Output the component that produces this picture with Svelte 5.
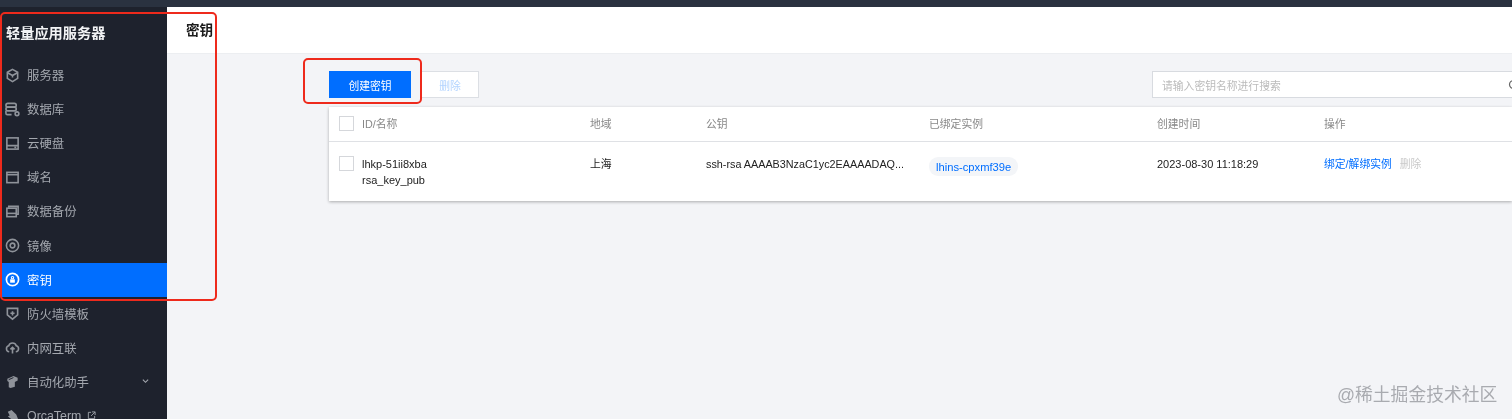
<script>
  const navItems = [
    { label: '服务器', icon: 'server' },
    { label: '数据库', icon: 'database' },
    { label: '云硬盘', icon: 'disk' },
    { label: '域名', icon: 'domain' },
    { label: '数据备份', icon: 'backup' },
    { label: '镜像', icon: 'image' },
    { label: '密钥', icon: 'key', active: true },
    { label: '防火墙模板', icon: 'shield' },
    { label: '内网互联', icon: 'cloud' },
    { label: '自动化助手', icon: 'box', chevron: true },
    { label: 'OrcaTerm', icon: 'orca', external: true }
  ];
</script>

<div class="page">
  <div class="topbar"></div>
  <div class="main">
    <aside class="sidebar">
      <div class="brand">轻量应用服务器</div>
      <nav>
        {#each navItems as item}
          <div class="nav-item" class:active={item.active}>
            <svg class="nav-icon" viewBox="0 0 16 16" fill="none" stroke="currentColor" stroke-width="1.7">
              {#if item.icon === 'server'}
                <path d="M8 1.500l5.500 3v6.500L8 14.500 2.500 11V4.500z" />
                <path d="M2.800 5L8 8l5.200-3M8 8v2" />
              {:else if item.icon === 'database'}
                <rect x="1" y="1.500" width="11" height="4" rx="2" />
                <rect x="1" y="5.500" width="11" height="4" rx="2" />
                <path d="M7 13.500H2.500A1.500 1.500 0 0 1 1 12V9.500" />
                <circle cx="12.800" cy="12.500" r="2" />
              {:else if item.icon === 'disk'}
                <rect x="2" y="2" width="12" height="12" />
                <path d="M2 10.300h12M10 12.300h2" />
              {:else if item.icon === 'domain'}
                <rect x="2" y="2.500" width="12" height="11" />
                <path d="M2 5h12" />
              {:else if item.icon === 'backup'}
                <path d="M4 4V2.500h10V11h-2" />
                <rect x="2" y="4.500" width="10" height="9" />
                <path d="M2 10h10" />
              {:else if item.icon === 'image'}
                <circle cx="8" cy="8" r="6.500" />
                <circle cx="8" cy="8" r="2.500" />
              {:else if item.icon === 'key'}
                <circle cx="8" cy="8" r="6.500" stroke-width="1.800" />
                <circle cx="8" cy="6" r="1.300" stroke-width="1.100" />
                <rect x="5.500" y="7.800" width="5" height="3.600" fill="currentColor" stroke="none" />
              {:else if item.icon === 'shield'}
                <path d="M2.500 2.500h11v7L8 14l-5.500-4.500z" />
                <path d="M8 5.500v4.500M5.800 7.700h4.400" />
              {:else if item.icon === 'cloud'}
                <path d="M4.500 12.500a3.200 3.200 0 0 1-.5-6.300 4.200 4.200 0 0 1 8 0 3.200 3.200 0 0 1-.5 6.300" />
                <path d="M8 14.500V8M5.800 10L8 7.800l2.200 2.200" />
              {:else if item.icon === 'box'}
                <path d="M2.500 5L9 2l4.500 2v3l-3 1.500v5L6 15l-2-1V8.500L2.500 7.500z" fill="currentColor" stroke="none" />
                <path d="M4 6l5-2.200" stroke="#1e222d" stroke-width="1" />
              {:else}
                <path d="M3 4l4-2 5 5 2 5-2 2-5-2-4-3 2-1z" fill="currentColor" stroke="none" />
              {/if}
            </svg>
            <span>{item.label}</span>
            {#if item.external}
              <svg class="external" viewBox="0 0 10 10" fill="none" stroke="currentColor" stroke-width="1">
                <path d="M8.500 5.500v3h-7v-7h3M5.500 1h3.500v3.500M9 1L4.500 5.500" />
              </svg>
            {/if}
            {#if item.chevron}
              <svg class="chevron" viewBox="0 0 8 6" fill="none" stroke="currentColor" stroke-width="1.300">
                <path d="M1 1.500l3 3 3-3" />
              </svg>
            {/if}
          </div>
        {/each}
      </nav>
    </aside>

    <div class="content">
      <header class="content-header">密钥</header>
      <div class="body">
        <div class="toolbar">
          <div class="btn primary">创建密钥</div>
          <div class="btn ghost">删除</div>
          <div class="search">
            <span>请输入密钥名称进行搜索</span>
            <svg class="search-icon" viewBox="0 0 12 12" fill="none" stroke="#666" stroke-width="1.200">
              <circle cx="5.500" cy="5.500" r="4" />
              <path d="M8.500 8.500L11 11" />
            </svg>
          </div>
        </div>

        <div class="table">
          <div class="row head">
            <div class="check"></div>
            <div>ID/名称</div>
            <div>地域</div>
            <div>公钥</div>
            <div>已绑定实例</div>
            <div>创建时间</div>
            <div>操作</div>
          </div>
          <div class="row item">
            <div class="check"></div>
            <div class="latin">lhkp-51ii8xba<br />rsa_key_pub</div>
            <div>上海</div>
            <div>ssh-rsa AAAAB3NzaC1yc2EAAAADAQ...</div>
            <div><span class="tag">lhins-cpxmf39e</span></div>
            <div class="latin">2023-08-30 11:18:29</div>
            <div class="actions"><span class="link">绑定/解绑实例</span><span class="off">删除</span></div>
          </div>
        </div>
      </div>
    </div>
  </div>

  <div class="mark mark-side"></div>
  <div class="mark mark-btn"></div>
  <div class="watermark">@稀土掘金技术社区</div>
</div>

<style>
  :global(body) {
    margin: 0;
    overflow: hidden;
  }

  .page {
    position: relative;
    width: 1512px;
    height: 419px;
    overflow: hidden;
    background: #f3f4f7;
    font-family: "Liberation Sans", "Noto Sans CJK SC", sans-serif;
    font-size: 10.8px;
    color: #222;
    filter: blur(0.3px);
  }

  .topbar {
    height: 7px;
    background: #2a3240;
  }

  .main {
    display: flex;
    height: 412px;
  }

  .sidebar {
    width: 167px;
    flex-shrink: 0;
    background: #1e222d;
    color: #a3a7ae;
  }

  .brand {
    height: 51px;
    padding: 0 0 0 6px;
    line-height: 52px;
    font-size: 14.2px;
    font-weight: 700;
    color: #f2f3f5;
  }

  nav {
    display: flex;
    flex-direction: column;
  }

  .nav-item {
    display: flex;
    align-items: center;
    position: relative;
    height: 34.1px;
    padding-left: 5px;
    font-size: 12.4px;
  }

  .nav-item.active {
    background: #006eff;
    color: #fff;
  }

  .nav-icon {
    width: 15px;
    height: 15px;
    margin-right: 7px;
    flex-shrink: 0;
    opacity: 0.85;
  }

  .active .nav-icon {
    opacity: 1;
  }

  .external {
    width: 9px;
    height: 9px;
    margin-left: 6px;
  }

  .chevron {
    position: absolute;
    left: 142px;
    top: 13px;
    width: 7px;
    height: 6px;
  }

  .content {
    flex: 1;
    min-width: 0;
  }

  .content-header {
    height: 46px;
    padding-left: 19px;
    line-height: 47px;
    background: #fff;
    font-size: 13.6px;
    font-weight: 700;
    color: #1c1c1c;
    box-shadow: 0 1px 0 #eceef1;
  }

  .body {
    padding: 18px 0 0 162px;
  }

  .toolbar {
    display: flex;
    height: 27px;
    gap: 10px;
    margin-bottom: 9px;
  }

  .btn {
    box-sizing: border-box;
    display: flex;
    align-items: center;
    justify-content: center;
    flex-shrink: 0;
    height: 27px;
  }

  .primary {
    width: 82px;
    background: #006eff;
    color: #fff;
  }

  .ghost {
    width: 58px;
    background: #fff;
    border: 1px solid #dcdfe4;
    color: #b3d4ff;
  }

  .search {
    box-sizing: border-box;
    display: flex;
    align-items: center;
    justify-content: space-between;
    flex-shrink: 0;
    width: 372px;
    margin-left: 663px;
    padding: 0 0 0 9px;
    background: #fff;
    border: 1px solid #d8dbe0;
    color: #bbb;
  }

  .search-icon {
    width: 12px;
    height: 12px;
    margin-right: 3px;
    flex-shrink: 0;
  }

  .table {
    background: #fff;
    box-shadow: 0 1px 3px rgba(0, 0, 0, 0.3);
  }

  .row {
    display: grid;
    grid-template-columns: 23px 228px 116px 223px 228px 167px 1fr;
    padding-left: 10px;
  }

  .head {
    height: 35px;
    align-items: center;
    padding-bottom: 2px;
    border-bottom: 1px solid #dfe1e5;
    color: #888;
    box-sizing: border-box;
  }

  .item {
    height: 59px;
    padding-top: 14px;
    box-sizing: border-box;
    line-height: 16px;
  }

  .latin {
    font-size: 11px;
  }

  .check {
    box-sizing: border-box;
    width: 15px;
    height: 15px;
    background: #fff;
    border: 1px solid #d5d7db;
  }

  .tag {
    display: inline-block;
    margin-top: 1px;
    padding: 1.5px 7px;
    border-radius: 9px;
    background: #f3f5f8;
    font-size: 11.2px;
    color: #006eff;
  }

  .actions {
    display: flex;
    gap: 8px;
  }

  .link {
    color: #006eff;
  }

  .off {
    color: #c9c9c9;
  }

  .mark {
    position: absolute;
    box-sizing: border-box;
    border: 2px solid #ee2a1c;
    border-radius: 5px;
  }

  .mark-side {
    left: 0;
    top: 12px;
    width: 217px;
    height: 289px;
  }

  .mark-btn {
    left: 303px;
    top: 58px;
    width: 119px;
    height: 46px;
  }

  .watermark {
    position: absolute;
    left: 1337px;
    top: 380px;
    font-size: 17.8px;
    color: #a9abb0;
    white-space: nowrap;
  }
</style>
